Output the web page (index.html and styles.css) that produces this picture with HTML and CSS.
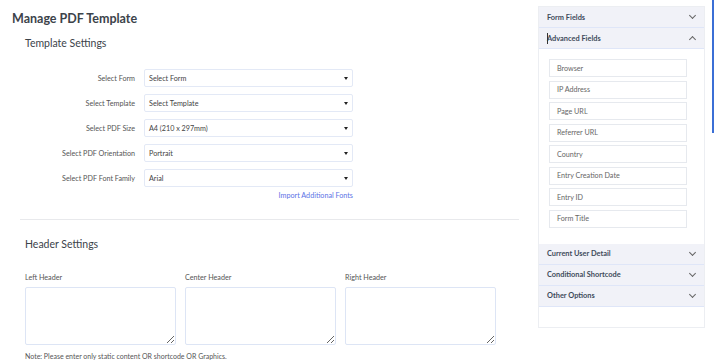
FILE: index.html
```html
<!DOCTYPE html>
<html lang="en">
<head>
    <meta charset="UTF-8">
    <meta name="viewport" content="width=device-width, initial-scale=1.0">
    <title>Manage PDF Template</title>
    <link rel="stylesheet" href="styles.css">
</head>
<body>
    <div class="page">
        <div class="main">
            <h1>Manage PDF Template</h1>

            <div class="section">
                <h2>Template Settings</h2>
                <div class="form-grid">
                    <label>Select Form</label>
                    <div class="select"><span>Select Form</span><i class="caret"></i></div>
                    <label>Select Template</label>
                    <div class="select"><span>Select Template</span><i class="caret"></i></div>
                    <label>Select PDF Size</label>
                    <div class="select"><span>A4 (210 x 297mm)</span><i class="caret"></i></div>
                    <label>Select PDF Orientation</label>
                    <div class="select"><span>Portrait</span><i class="caret"></i></div>
                    <label>Select PDF Font Family</label>
                    <div class="select"><span>Arial</span><i class="caret"></i></div>
                    <div></div>
                    <a class="import-link" href="#">Import Additional Fonts</a>
                </div>
            </div>

            <hr class="divider">

            <div class="section">
                <h2 class="header-title">Header Settings</h2>
                <div class="header-grid">
                    <div class="header-col">
                        <label>Left Header</label>
                        <textarea></textarea>
                    </div>
                    <div class="header-col">
                        <label>Center Header</label>
                        <textarea></textarea>
                    </div>
                    <div class="header-col">
                        <label>Right Header</label>
                        <textarea></textarea>
                    </div>
                </div>
                <p class="note">Note: Please enter only static content OR shortcode OR Graphics.</p>
            </div>
        </div>

        <div class="sidebar">
            <div class="acc-head">Form Fields <span class="chev down"></span></div>
            <div class="acc-head open"><span class="caret-line"></span>Advanced Fields <span class="chev up"></span></div>
            <div class="acc-body">
                <div class="field">Browser</div>
                <div class="field">IP Address</div>
                <div class="field">Page URL</div>
                <div class="field">Referrer URL</div>
                <div class="field">Country</div>
                <div class="field">Entry Creation Date</div>
                <div class="field">Entry ID</div>
                <div class="field">Form Title</div>
            </div>
            <div class="acc-head">Current User Detail <span class="chev down"></span></div>
            <div class="acc-head">Conditional Shortcode <span class="chev down"></span></div>
            <div class="acc-head">Other Options <span class="chev down"></span></div>
        </div>
    </div>
    <div class="scroll-thumb"></div>
</body>
</html>
```

FILE: styles.css
```css
body {
    font-family: Lato, "Open Sans", sans-serif;
    background-color: #fff;
    color: #555;
    margin: 0;
    overflow: hidden;
}
.page {
    display: flex;
    align-items: flex-start;
}
.main {
    width: 538px;
    padding-left: 12px;
    box-sizing: border-box;
}
h1 {
    font-size: 12.5px;
    font-weight: 700;
    color: #3c434a;
    margin: 11px 0 0;
    line-height: 16px;
}
h2 {
    font-size: 10.5px;
    font-weight: 400;
    color: #3c434a;
    margin: 0;
    line-height: 14px;
}
.section {
    padding-left: 13px;
}
.section h2 {
    margin-top: 9px;
}
.section h2.header-title {
    margin-top: 17px;
}
.form-grid {
    display: grid;
    grid-template-columns: 110px 209px;
    column-gap: 9px;
    row-gap: 7px;
    align-items: center;
    margin-top: 19px;
}
.form-grid label {
    text-align: right;
    font-size: 7.2px;
    color: #555;
}
.select {
    height: 18px;
    border: 1px solid #e3e9f6;
    border-radius: 2px;
    box-sizing: border-box;
    display: flex;
    align-items: center;
    justify-content: space-between;
    padding: 0 4px 0 4px;
    font-size: 7.2px;
    color: #444;
}
.caret {
    width: 0;
    height: 0;
    border-left: 2.5px solid transparent;
    border-right: 2.5px solid transparent;
    border-top: 3px solid #222;
}
.import-link {
    justify-self: end;
    font-size: 7.2px;
    color: #5c73e6;
    text-decoration: none;
    margin-top: -3px;
}
.divider {
    border: none;
    border-top: 1px solid #e8e9ec;
    margin: 19px 0 0 8px;
    width: 499px;
}
.header-grid {
    display: flex;
    gap: 9px;
    margin-top: 22px;
}
.header-col {
    display: flex;
    flex-direction: column;
}
.header-col label {
    font-size: 7.2px;
    color: #555;
    line-height: 10px;
    margin-bottom: 4px;
}
textarea {
    width: 151px;
    height: 58px;
    box-sizing: border-box;
    border: 1px solid #dde5f5;
    border-radius: 2px;
    resize: vertical;
    margin: 0;
}
.note {
    font-size: 7px;
    color: #555;
    margin: 7px 0 0;
}
.sidebar {
    width: 167px;
    height: 322px;
    margin-top: 6px;
    border: 1px solid #eceef2;
    box-sizing: border-box;
}
.acc-head {
    position: relative;
    height: 21px;
    background-color: #f1f2f8;
    border-bottom: 1px solid #dfe6f8;
    box-sizing: border-box;
    display: flex;
    align-items: center;
    justify-content: space-between;
    padding: 0 9px 0 8px;
    font-size: 7.4px;
    font-weight: 700;
    color: #3e4b5b;
}
.caret-line {
    position: absolute;
    left: 8px;
    top: 5px;
    width: 1px;
    height: 11px;
    background-color: #333;
}
.chev {
    width: 4px;
    height: 4px;
    border-right: 1px solid #666;
    border-bottom: 1px solid #666;
}
.chev.down {
    transform: rotate(45deg);
    margin-top: -3px;
}
.chev.up {
    transform: rotate(-135deg);
    margin-top: 3px;
}
.acc-body {
    padding: 10px 17px 16px 10px;
    display: flex;
    flex-direction: column;
    gap: 3.5px;
}
.field {
    height: 18px;
    border: 1px solid #e6e9ee;
    box-sizing: border-box;
    display: flex;
    align-items: center;
    padding-left: 7px;
    font-size: 7.2px;
    color: #666;
}
.scroll-thumb {
    position: absolute;
    top: 0;
    right: 1px;
    width: 2px;
    height: 133px;
    background-color: #3b6fd6;
}
```
